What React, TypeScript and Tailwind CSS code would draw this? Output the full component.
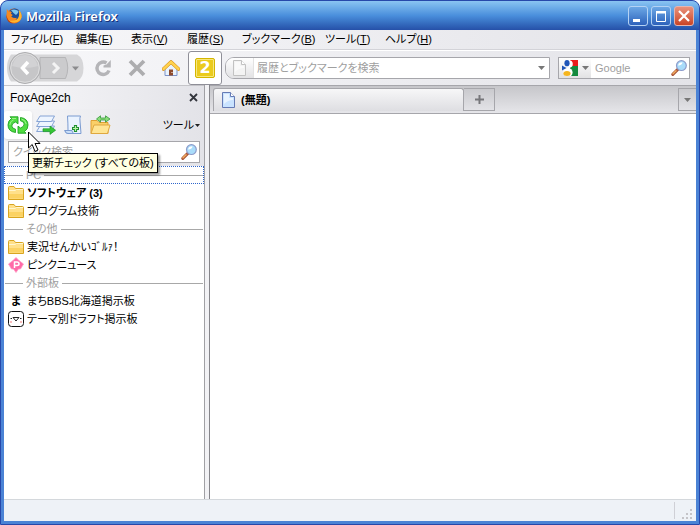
import type { ReactNode } from 'react';

const menus = [
    { label: 'ファイル', key: 'F', width: 'w-[65px]' },
    { label: '編集', key: 'E', width: 'w-[55px]' },
    { label: '表示', key: 'V', width: 'w-[56px]' },
    { label: '履歴', key: 'S', width: 'w-[55px]' },
    { label: 'ブックマーク', key: 'B', width: 'w-[83px]' },
    { label: 'ツール', key: 'T', width: 'w-[60px]' },
    { label: 'ヘルプ', key: 'H', width: 'w-[60px]' },
];

function FirefoxLogo() {
    return (
        <svg className="h-4 w-4" viewBox="0 0 16 16">
            <circle cx="8" cy="8" r="7.6" fill="#e8650f" />
            <circle cx="8.6" cy="6.2" r="5.8" fill="#1c4f9c" />
            <path d="M5 2Q9 .4 12.500 3Q12.500 5.500 10 7L7.500 5Z" fill="#7cc6ee" />
            <path d="M.8 1L3 3.400Q4.800 3 5.800 4.600L4.800 5.800L6.800 7L5.200 8.400Q7.600 10.800 11 9.800L9 13H3L.6 8Z" fill="#f58a22" />
            <path d="M12.800 2Q16 5 15.600 9.500Q14 14.500 8.500 14.800Q4.500 14.600 3 12.400Q7 13.500 10.800 11.500Q14.200 8.500 12.800 2Z" fill="#ffb52e" />
            <path d="M.5 7Q.8 13 7 15.600Q1.500 15 .4 9Z" fill="#b93a10" />
        </svg>
    );
}

function Magnifier() {
    return (
        <svg className="h-4 w-4 shrink-0" viewBox="0 0 16 16">
            <path d="M6.800 9.400L1.800 14.400" stroke="#a8563a" strokeWidth="3" strokeLinecap="round" />
            <path d="M5 10.800L2 13.800" stroke="#f2aa5c" strokeWidth="1.400" strokeLinecap="round" />
            <circle cx="10.400" cy="5.600" r="4.900" fill="#a9dcfa" stroke="#8d9ccb" strokeWidth="1.200" />
            <path d="M7 5.600Q7.600 2.200 11.500 2.200Q11.500 5 7 5.600Z" fill="#fff" />
        </svg>
    );
}

function Folder() {
    return (
        <svg className="h-4 w-4" viewBox="0 0 16 16">
            <path d="M.5 14.500V2.500Q.5 1.500 1.500 1.500H6L7.500 3.500H14.500Q15.500 3.500 15.500 4.500V14.500Z" fill="#ffe08a" stroke="#d9a520" />
            <path d="M1 5.500H7L8.500 4.500H15" stroke="#fff6cf" fill="none" />
            <path d="M1 13.500H15V9H1Z" fill="#fbd263" />
        </svg>
    );
}

function PageIcon({ muted = false }: { muted?: boolean }) {
    return (
        <svg className="h-4 w-[13px]" viewBox="0 0 13 16">
            <path d="M.5 .5H8.500L12.500 4.500V15.500H.5Z" fill={muted ? '#f3f3f3' : '#c9e3ff'} stroke={muted ? '#c2c2c2' : '#667bb5'} />
            <path d="M2 2H7V6H11V8Q6 8 2 12Z" fill="#fff" opacity=".6" />
            <path d="M8.500 .5V4.500H12.500" fill="#fff" stroke={muted ? '#c2c2c2' : '#667bb5'} />
        </svg>
    );
}

function RefreshIcon() {
    return (
        <svg className="h-[18px] w-[22px]" viewBox="0 0 22 18">
            <g fill="#4fdc40" stroke="#1fa324" strokeWidth=".9" strokeLinejoin="round">
                <path d="M8.500 16.500Q1 15.500 1 9Q1 4.500 4.500 2.500L3 .8H11V7.800L8.500 6Q4.800 7.200 4.800 10Q5 12.500 8.500 13.200Z" />
                <path d="M13.500 1.500Q21 2.500 21 9Q21 13.500 17.500 15.500L19 17.200H11V10.200L13.500 12Q17.200 10.800 17.200 8Q17 5.500 13.500 4.800Z" />
            </g>
            <path d="M5 2.500H9M2.800 9Q3 5 6.500 4M14.500 3Q18.500 4 19.200 8" fill="none" stroke="#a4f593" strokeWidth=".9" />
        </svg>
    );
}

function StackIcon() {
    return (
        <svg className="h-5 w-5" viewBox="0 0 20 20">
            <g fill="#eef5ff" stroke="#7b9bd0" strokeWidth=".9">
                <path d="M4 11H18.500L15.500 16.500H.6Z" />
                <path d="M4 6H18.500L15.500 11.500H.6Z" />
                <path d="M4 1H18.500L15.500 6.500H.6Z" />
            </g>
            <path d="M7 13.800H14V11L19.600 15.200L14 19.400V16.600H7Z" fill="#35c535" stroke="#1d962a" strokeWidth=".7" />
        </svg>
    );
}

function AddPageIcon() {
    return (
        <svg className="h-5 w-[18px]" viewBox="0 0 18 20">
            <path d="M3.500 1H16.500Q15.500 3 16 6L17 18.500H4.500Q1.500 18.500 .8 15.500H4Q4 8 3.500 1Z" fill="#eaf3ff" stroke="#7b9bd0" />
            <path d="M.8 15.500H8Q8 18 10 18.500H4Q1.500 18.500 .8 15.500Z" fill="#c9def8" stroke="#7b9bd0" />
            <path d="M11.500 10V17M8 13.500H15" stroke="#1f8f30" strokeWidth="3.200" />
            <path d="M11.500 11V16M9 13.500H14" stroke="#baf5a8" strokeWidth="1.200" />
        </svg>
    );
}

function SyncFolderIcon() {
    return (
        <svg className="h-5 w-[21px]" viewBox="0 0 21 20">
            <path d="M1 18.500V5.500H7L9 7.500H18V18.500Z" fill="#fad068" stroke="#dfa032" />
            <path d="M1 18.500L4 10H20L17.500 18.500Z" fill="#ffe594" stroke="#dfa840" />
            <path d="M6.500 4L10.500 .8V3H15.500V.8L20 4L15.500 7.200V5H10.500V7.200Z" fill="#8ade78" stroke="#36983c" strokeWidth=".8" />
        </svg>
    );
}

function Caret() {
    return (
        <svg className="h-1 w-[7px] shrink-0" viewBox="0 0 7 4">
            <path d="M0 0H7L3.500 4Z" fill="#777" />
        </svg>
    );
}

function TitleBar() {
    return (
        <header className="flex h-[29px] items-center rounded-t-md bg-linear-to-b from-[#8ac4f2] via-[#4a8fdc] to-[#2650a8] pl-[5px] pr-[5px]">
            <FirefoxLogo />
            <h1 className="ml-1 font-['Noto_Sans'] text-[13px] font-semibold text-white [text-shadow:1px_1px_0_#173078]">Mozilla Firefox</h1>
            <div className="ml-auto flex gap-[3px]">
                <button aria-label="最小化" className="h-5 w-5 rounded-[3px] border border-[#b4d2f4] bg-linear-to-b from-[#6ca7e5] to-[#2e62bb]">
                    <svg viewBox="0 0 18 18"><path d="M4 12H11V15H4Z" fill="#fff" /></svg>
                </button>
                <button aria-label="最大化" className="h-5 w-5 rounded-[3px] border border-[#b4d2f4] bg-linear-to-b from-[#6ca7e5] to-[#2e62bb]">
                    <svg viewBox="0 0 18 18"><path d="M4.500 5H13.500V14.500H4.500Z" fill="none" stroke="#fff" /><path d="M4 4H14V6.500H4Z" fill="#fff" /></svg>
                </button>
                <button aria-label="閉じる" className="h-5 w-5 rounded-[3px] border border-[#e6b4ae] bg-linear-to-b from-[#e8907a] to-[#ca4323]">
                    <svg viewBox="0 0 18 18"><path d="M4 4L14 14M14 4L4 14" stroke="#fff" strokeWidth="2.200" /></svg>
                </button>
            </div>
        </header>
    );
}

function MenuBar() {
    return (
        <nav className="flex h-5 items-center border-b border-[#d3d3d8] pb-px pl-[7px]">
            {menus.map((menu) => (
                <button key={menu.key} className={`${menu.width} shrink-0 whitespace-nowrap text-left`}>
                    {menu.label}(<u>{menu.key}</u>)
                </button>
            ))}
        </nav>
    );
}

function NavBar() {
    return (
        <div className="flex h-[35px] items-center border-t border-white pl-[3px] pr-1.5">
            <svg className="h-8 w-[77px] shrink-0" viewBox="0 0 77 32">
                <path d="M4 2.500H70Q76.500 6 76.500 16Q76.500 26 70 29.500H4Q0 24 0 16Q0 8 4 2.500Z" fill="#d6d6d8" />
                <path d="M33 5.500H58.500Q63 16 58.500 26.500H33Z" fill="#cbcbcd" stroke="#b5b5b7" />
                <circle cx="18" cy="16" r="15.500" fill="#c6c6c8" stroke="#adadaf" />
                <circle cx="18" cy="16" r="14.300" fill="none" stroke="#dededf" />
                <path d="M5 14Q8 3 18 3Q28 3 31 14Q18 18 5 14Z" fill="#d2d2d4" />
                <path d="M21 10L15.500 16L21 22" fill="none" stroke="#fff" strokeWidth="3.500" />
                <path d="M46 11L51 16L46 21" fill="none" stroke="#f4f4f4" strokeWidth="3" />
                <path d="M65 14.500H72L68.500 18.500Z" fill="#8b8b8d" />
            </svg>
            <button aria-label="更新" className="ml-2.5 shrink-0">
                <svg className="h-[18px] w-[18px]" viewBox="0 0 18 18"><path d="M15 11.500A6.200 6.200 0 1 1 12.500 4" fill="none" stroke="#b5b5b8" strokeWidth="3.400" /><path d="M16.800 1V8.500H9.500V6.500L12.500 5.500Z" fill="#b5b5b8" /></svg>
            </button>
            <button aria-label="中止" className="ml-4 shrink-0">
                <svg className="h-[18px] w-[18px]" viewBox="0 0 18 18"><path d="M2 2L16 16M16 2L2 16" stroke="#adadaf" strokeWidth="3.800" /></svg>
            </button>
            <button aria-label="ホーム" className="ml-4 shrink-0">
                <svg className="h-[18px] w-[18px]" viewBox="0 0 18 18">
                    <path d="M3 9V16.500H15V9L9 3Z" fill="#e9f3fd" stroke="#7d92c8" />
                    <path d="M1.500 10L9 3L16.500 10" fill="none" stroke="#d28a18" strokeWidth="3.600" strokeLinecap="round" strokeLinejoin="round" />
                    <path d="M1.500 10L9 3L16.500 10" fill="none" stroke="#ffd24d" strokeWidth="2.400" strokeLinecap="round" strokeLinejoin="round" />
                    <path d="M7 10.500H11V16.500H7Z" fill="#8e4a2c" />
                    <path d="M9.500 13.500H10.500" stroke="#fff" />
                </svg>
            </button>
            <button className="ml-2 flex h-[34px] w-[34px] shrink-0 items-center justify-center rounded-[3px] border border-[#8f8f98] bg-white">
                <span className="flex h-5 w-5 items-center justify-center rounded-[2px] border border-[#d4b600] bg-[#ebcb1d] font-['DejaVu_Sans'] text-base font-bold text-white ring-1 ring-[#f8e77c] ring-inset">2</span>
            </button>
            <div className="ml-[3px] flex h-[22px] grow items-center rounded-l-[9px] border border-[#a6a6ab] bg-white">
                <span className="flex h-5 w-7 shrink-0 items-center justify-center rounded-l-[8px] border-r border-[#e2e2e2] bg-linear-to-b from-white to-[#e2e2e4]"><PageIcon muted /></span>
                <input aria-label="アドレス" placeholder="履歴とブックマークを検索" className="w-full min-w-0 px-[3px] outline-none placeholder:text-[#a0a0a0]" />
                <span className="mr-1 flex"><Caret /></span>
            </div>
            <div className="ml-2 flex h-[22px] w-[132px] shrink-0 items-center border border-[#a6a6ab] bg-white">
                <button aria-label="検索エンジン" className="flex h-5 w-8 shrink-0 items-center gap-1 bg-linear-to-b from-white to-[#e2e2e4] pl-[3px]">
                    <svg className="h-4 w-4 shrink-0" viewBox="0 0 16 16">
                        <path d="M8 0H16V6H8Z" fill="#ea1c1c" /><path d="M8 6H16V16H8Z" fill="#138a3e" />
                        <circle cx="7" cy="4" r="3.800" fill="#fff" /><circle cx="6" cy="12.500" r="4.600" fill="#fff" />
                        <ellipse cx="5" cy="3.200" rx="2.600" ry="3.100" fill="#1f55b8" />
                        <path d="M0 5.500L4.500 8L0 10.500Z" fill="#1f55b8" />
                        <ellipse cx="5" cy="13.400" rx="3.600" ry="2.500" fill="#f5b51e" />
                    </svg>
                    <Caret />
                </button>
                <input aria-label="検索" placeholder="Google" className="w-full min-w-0 px-1 outline-none placeholder:text-[#a0a0a0]" />
                <span className="mr-0.5"><Magnifier /></span>
            </div>
        </div>
    );
}

function Item({ icon, children, bold = false }: { icon: ReactNode; children: ReactNode; bold?: boolean }) {
    return (
        <li className={bold ? 'flex h-[18px] items-center gap-[3px] pl-1 font-bold' : 'flex h-[18px] items-center gap-[3px] pl-1'}>
            {icon}
            <span className="whitespace-nowrap">{children}</span>
        </li>
    );
}

function Separator({ children, selected = false }: { children: string; selected?: boolean }) {
    return (
        <li className={selected ? 'flex h-[18px] items-center gap-[3px] border border-dotted border-[#2f66cc] text-[#a0a0a0]' : 'flex h-[18px] items-center gap-[3px] px-px text-[#a0a0a0]'}>
            <span className="h-px w-[18px] bg-[#a8a8a8]" />
            {children}
            <span className="h-px grow bg-[#a8a8a8]" />
        </li>
    );
}

function Sidebar() {
    return (
        <aside className="flex w-[201px] shrink-0 flex-col border-r border-[#a0a0a4]">
            <div className="flex h-6 items-center justify-between border-t border-[#c5c5c9] bg-linear-to-r from-[#f8f8fa] to-[#e3e3e8] px-1.5">
                <h2 className="text-xs">FoxAge2ch</h2>
                <button aria-label="サイドバーを閉じる"><svg className="h-[9px] w-[9px]" viewBox="0 0 9 9"><path d="M1 1L8 8M8 1L1 8" stroke="#33353c" strokeWidth="1.800" /></svg></button>
            </div>
            <div className="relative h-[57px] bg-linear-to-r from-[#f6f6f8] to-[#e3e3e8]">
                <div className="flex h-8 items-center">
                    <button aria-label="更新チェック" className="flex h-7 w-7 items-center justify-center rounded-[3px] bg-white shadow"><RefreshIcon /></button>
                    <button aria-label="すべて開く" className="ml-1"><StackIcon /></button>
                    <button aria-label="追加" className="ml-2"><AddPageIcon /></button>
                    <button aria-label="フォルダを開く" className="ml-2"><SyncFolderIcon /></button>
                    <button className="ml-auto mr-1 flex items-center gap-px">ツール<svg className="h-[3px] w-[5px]" viewBox="0 0 5 3"><path d="M0 0H5L2.500 3Z" fill="#222" /></svg></button>
                </div>
                <div className="mx-1 flex h-[22px] items-center border border-[#a6a6ab] bg-white pr-0.5">
                    <input aria-label="クイック検索" placeholder="クイック検索" className="w-full min-w-0 px-1 outline-none placeholder:text-[#a0a0a0]" />
                    <Magnifier />
                </div>
                <div role="tooltip" className="absolute left-6 top-11 z-10 flex h-5 items-center whitespace-nowrap border border-black bg-[#ffffe1] px-[3px] shadow-[2px_2px_2px_#0006]">更新チェック (すべての板)</div>
                <svg className="absolute left-6 top-[22px] z-20 h-[22px] w-[13px]" viewBox="0 0 13 22"><path d="M.5 1V17L4.200 13.500L7 20.500L10 19L7 12.500H12Z" fill="#fff" stroke="#000" /></svg>
            </div>
            <ul className="grow bg-white">
                <Separator selected>PC</Separator>
                <Item icon={<Folder />} bold>ソフトウェア (3)</Item>
                <Item icon={<Folder />}>プログラム技術</Item>
                <Separator>その他</Separator>
                <Item icon={<Folder />}>実況せんかいｺﾞﾙｧ！</Item>
                <Item icon={<svg className="h-4 w-4" viewBox="0 0 16 16"><path d="M8 .5L11 3.500L15.500 7L12.500 12H10.500L8 15.500L5.500 12H3.500L.5 7L5 3.500Z" fill="#ff6aa8" stroke="#ff9cc5" strokeWidth=".8" /><path d="M6.500 11V5H9Q11 5 11 7Q11 8.500 9 8.500H6.500" fill="none" stroke="#fff" strokeWidth="1.500" /></svg>}>ピンクニュース</Item>
                <Separator>外部板</Separator>
                <Item icon={<b className="w-4 text-center">ま</b>}>まちBBS北海道掲示板</Item>
                <Item icon={<svg className="h-4 w-4" viewBox="0 0 16 16"><rect x=".5" y=".5" width="15" height="15" rx="3" fill="#fff" stroke="#111" /><path d="M2.500 7.500H4M12 7.500H13.500M5 6.500H11L8 10Z" fill="none" stroke="#222" /><path d="M2 11H4M12 11H14" stroke="#f8baba" strokeWidth="2" /></svg>}>テーマ別ドラフト掲示板</Item>
            </ul>
        </aside>
    );
}

function Browser() {
    return (
        <main className="flex min-w-0 grow flex-col border-l border-[#85858a]">
            <div className="flex h-[29px] items-end border-y border-[#a6a6ab] bg-linear-to-b from-[#c6c6ca] to-[#e6e6ea] pb-0.5">
                <div className="ml-[3px] flex h-[23px] w-[251px] items-center gap-1.5 rounded-t-[3px] border border-b-0 border-[#a6a6ab] bg-linear-to-b from-[#f7f7f8] to-[#dedee2] pl-2 font-bold">
                    <PageIcon />(無題)
                </div>
                <button aria-label="新しいタブ" className="flex h-[23px] w-[31px] items-center justify-center border border-l-0 border-[#a6a6ab]">
                    <svg className="h-[9px] w-[9px]" viewBox="0 0 9 9"><path d="M4.500 0V9M0 4.500H9" stroke="#77777b" strokeWidth="2" /></svg>
                </button>
                <button aria-label="タブの一覧" className="ml-auto flex h-[23px] w-[18px] items-center justify-center border border-r-0 border-[#a6a6ab]"><Caret /></button>
            </div>
            <div className="grow bg-white" />
        </main>
    );
}

export default function App() {
    return (
        <div className="flex h-screen flex-col overflow-hidden rounded-t-lg border border-[#2748aa] bg-[#4b83d5] text-[11px] leading-4 text-black font-['Liberation_Sans','Noto_Sans_CJK_JP',sans-serif] [font-feature-settings:'palt']">
            <TitleBar />
            <div className="mx-[3px] mb-[3px] flex min-h-0 grow flex-col bg-linear-to-r from-[#f8f8fa] to-[#e3e3e8]">
                <MenuBar />
                <NavBar />
                <div className="flex min-h-0 grow gap-1">
                    <Sidebar />
                    <Browser />
                </div>
                <footer className="flex h-[22px] justify-end border-t border-[#d4d8dc] bg-[#eef2f7] py-0.5">
                    <span className="w-px bg-[#cfd0d6]" />
                    <svg className="ml-1 mr-px h-[18px] w-4" viewBox="0 0 16 18"><path d="M11 7H13V9H11ZM7 11H9V13H7ZM11 11H13V13H11ZM3 15H5V17H3ZM7 15H9V17H7ZM11 15H13V17H11Z" fill="#c4c4c8" /></svg>
                </footer>
            </div>
        </div>
    );
}
